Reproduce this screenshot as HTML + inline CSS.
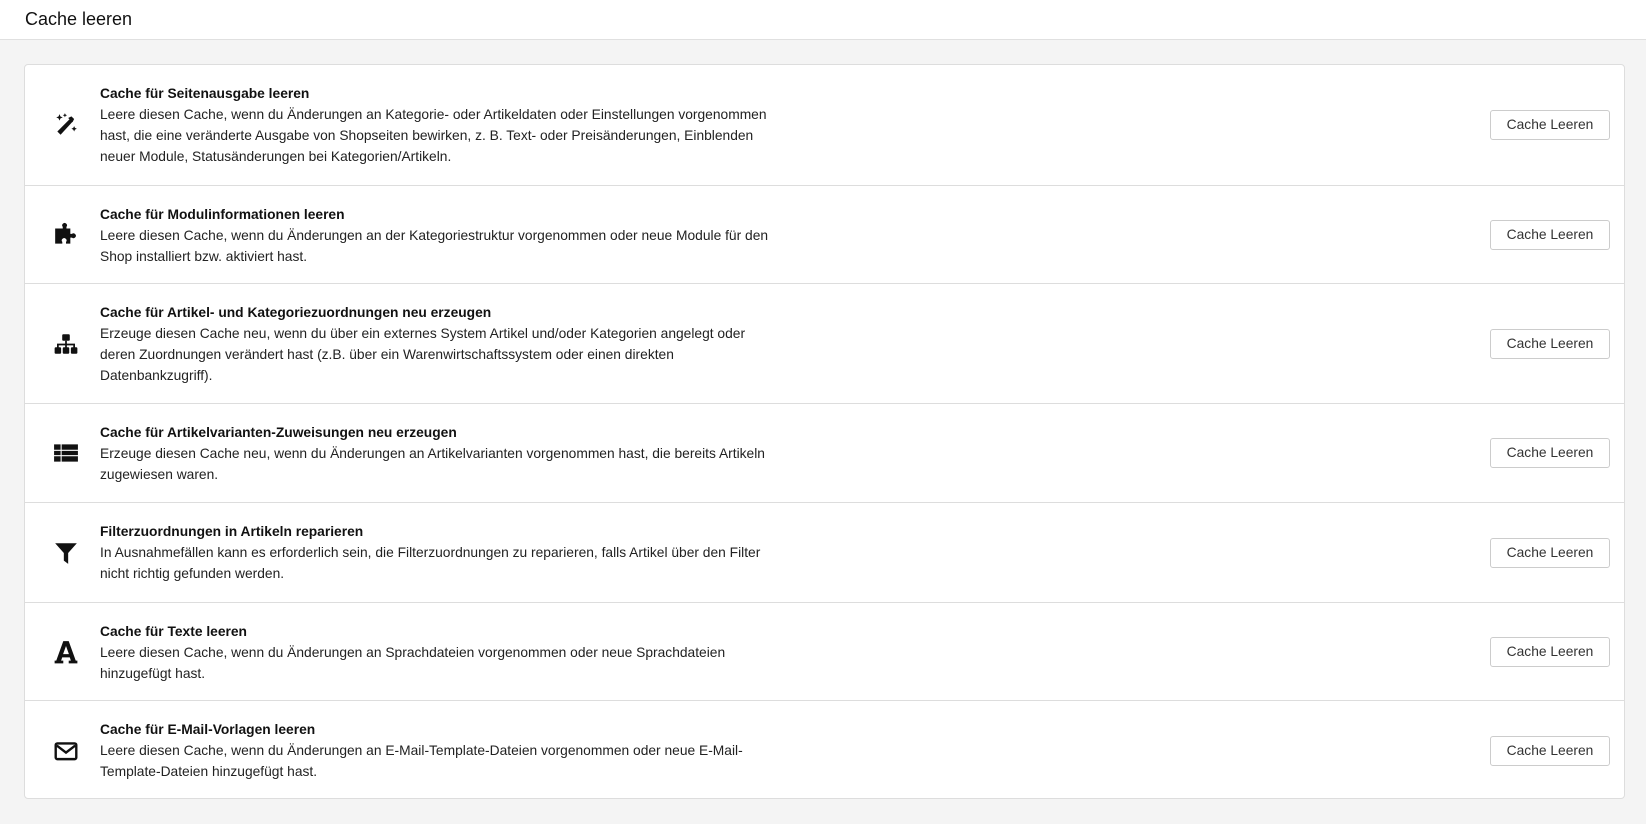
<!DOCTYPE html>
<html><head><meta charset="utf-8"><style>
*{box-sizing:border-box;margin:0;padding:0}
body{width:1646px;height:824px;background:#f4f4f4;font-family:"Liberation Sans",sans-serif;color:#222;overflow:hidden}
.hdr{height:40px;background:#fff;border-bottom:1px solid #e0e0e0;padding-left:25px;font-size:18px;line-height:39px;color:#111}
.card{position:absolute;left:24px;top:64px;width:1601px;height:735px;background:#fff;border:1px solid #ddd;border-radius:4px}
.row{position:absolute;left:0;right:0;border-bottom:1px solid #ddd}
.row:last-child{border-bottom:none}
.ic{position:absolute;left:28px;width:26px;height:26px;top:50%;margin-top:-13px}
.tx{position:absolute;left:75px;top:18px;font-size:13.8px;line-height:21px;white-space:nowrap;color:#222}
.tx b{display:block;color:#111}
.btn{position:absolute;left:1465px;width:120px;height:30px;top:50%;margin-top:-15px;border:1px solid #ccc;border-radius:3px;font-size:13.8px;line-height:28px;text-align:center;color:#333;background:#fff}
</style></head><body>
<div class="hdr">Cache leeren</div>
<div class="card">
<div class="row" style="top:0;height:121px">
<svg class="ic" viewBox="0 0 24 24"><path d="M15.5 6.5l2.5 2.5-11 12-3-3z" fill="#111"/><path d="M14 5.5l3-1.5 2.5 2.5-1.5 3z" fill="#111"/><path d="M6 2l.9 2.1L9 5l-2.1.9L6 8l-.9-2.1L3 5l2.1-.9zM19.5 13l.8 1.7 1.7.8-1.7.8-.8 1.7-.8-1.7-1.7-.8 1.7-.8zM11 1l.6 1.4L13 3l-1.4.6L11 5l-.6-1.4L9 3l1.4-.6z" fill="#111"/></svg>
<div class="tx"><b>Cache für Seitenausgabe leeren</b>Leere diesen Cache, wenn du Änderungen an Kategorie- oder Artikeldaten oder Einstellungen vorgenommen<br>hast, die eine veränderte Ausgabe von Shopseiten bewirken, z. B. Text- oder Preisänderungen, Einblenden<br>neuer Module, Statusänderungen bei Kategorien/Artikeln.</div>
<div class="btn">Cache Leeren</div></div>
<div class="row" style="top:121px;height:98px">
<svg class="ic" viewBox="0 0 24 24"><path d="M2 6h7V4.5a2.2 2.2 0 1 1 3.4 0V6H16v5h1.5a2.2 2.2 0 1 1 0 3.4H16V20h-4v-1.5a2.2 2.2 0 1 0-3.4 0V20H2z" fill="#111"/></svg>
<div class="tx"><b>Cache für Modulinformationen leeren</b>Leere diesen Cache, wenn du Änderungen an der Kategoriestruktur vorgenommen oder neue Module für den<br>Shop installiert bzw. aktiviert hast.</div>
<div class="btn">Cache Leeren</div></div>
<div class="row" style="top:219px;height:120px">
<svg class="ic" viewBox="0 0 24 24"><rect x="8.5" y="3" width="7" height="6" rx="1" fill="#111"/><path d="M12 9v3.5M4.5 16v-3.5h15V16M12 12.5V16" stroke="#111" stroke-width="1.6" fill="none"/><rect x="1.5" y="15" width="6" height="6" rx="1" fill="#111"/><rect x="9" y="15" width="6" height="6" rx="1" fill="#111"/><rect x="16.5" y="15" width="6" height="6" rx="1" fill="#111"/></svg>
<div class="tx"><b>Cache für Artikel- und Kategoriezuordnungen neu erzeugen</b>Erzeuge diesen Cache neu, wenn du über ein externes System Artikel und/oder Kategorien angelegt oder<br>deren Zuordnungen verändert hast (z.B. über ein Warenwirtschaftssystem oder einen direkten<br>Datenbankzugriff).</div>
<div class="btn">Cache Leeren</div></div>
<div class="row" style="top:339px;height:99px">
<svg class="ic" viewBox="0 0 24 24"><path d="M1 4h6v5H1zM8 4h15v5H8zM1 10h6v4H1zM8 10h15v4H8zM1 15h6v5H1zM8 15h15v5H8z" fill="#111"/></svg>
<div class="tx"><b>Cache für Artikelvarianten-Zuweisungen neu erzeugen</b>Erzeuge diesen Cache neu, wenn du Änderungen an Artikelvarianten vorgenommen hast, die bereits Artikeln<br>zugewiesen waren.</div>
<div class="btn">Cache Leeren</div></div>
<div class="row" style="top:438px;height:100px">
<svg class="ic" viewBox="0 0 24 24"><path d="M2 3h20l-8 9v10l-4-3v-7z" fill="#111"/></svg>
<div class="tx"><b>Filterzuordnungen in Artikeln reparieren</b>In Ausnahmefällen kann es erforderlich sein, die Filterzuordnungen zu reparieren, falls Artikel über den Filter<br>nicht richtig gefunden werden.</div>
<div class="btn">Cache Leeren</div></div>
<div class="row" style="top:538px;height:98px">
<svg class="ic" viewBox="0 0 24 24"><path d="M9.5 2h5l6.5 18h1.5v2.5h-8V20h2l-1-3H8.5l-1 3h2v2.5H1.5V20H3zM12 6.5L9.3 14h5.4z" fill="#111" fill-rule="evenodd"/></svg>
<div class="tx"><b>Cache für Texte leeren</b>Leere diesen Cache, wenn du Änderungen an Sprachdateien vorgenommen oder neue Sprachdateien<br>hinzugefügt hast.</div>
<div class="btn">Cache Leeren</div></div>
<div class="row" style="top:636px;height:99px">
<svg class="ic" viewBox="0 0 24 24"><rect x="2.5" y="5" width="19" height="14.5" rx="1.5" fill="none" stroke="#111" stroke-width="2.2"/><path d="M3.5 7l8.5 6.5L20.5 7" fill="none" stroke="#111" stroke-width="2.2"/></svg>
<div class="tx"><b>Cache für E-Mail-Vorlagen leeren</b>Leere diesen Cache, wenn du Änderungen an E-Mail-Template-Dateien vorgenommen oder neue E-Mail-<br>Template-Dateien hinzugefügt hast.</div>
<div class="btn">Cache Leeren</div></div>
</div>
</body></html>
